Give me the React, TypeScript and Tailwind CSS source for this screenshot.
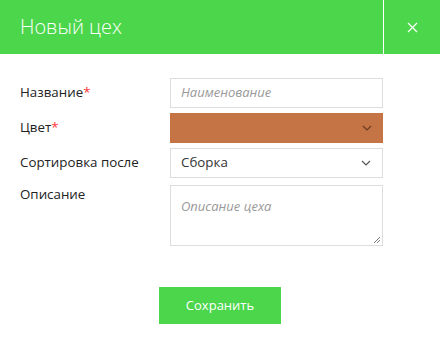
import React from "react";

const Chevron = ({ color = "#555" }: { color?: string }) => (
  <svg width="10" height="6" viewBox="0 0 10 6" fill="none">
    <path d="M1 1l4 4 4-4" stroke={color} strokeWidth="1.2" />
  </svg>
);

export default function App() {
  return (
    <div className="w-[440px] h-[340px] bg-white" style={{ fontFamily: '"Open Sans", sans-serif' }}>
      <div className="flex h-[54px] bg-[#4bd64b]">
        <div className="flex-1 flex items-center pl-[20px] text-white text-[20px] font-light">Новый цех</div>
        <div className="w-px bg-white" />
        <div className="w-[56px] flex items-center justify-center">
          <svg width="11" height="11" viewBox="0 0 11 11">
            <path d="M1 1l9 9M10 1l-9 9" stroke="white" strokeWidth="1.2" />
          </svg>
        </div>
      </div>
      <div className="pt-[24px] pl-[20px] flex flex-col">
        <div className="flex items-center h-[30px]">
          <div className="w-[150px] text-[13.33px] text-[#222]">
            Название<span className="text-[#f33]">*</span>
          </div>
          <div className="w-[213px] h-[30px] border border-[#ddd] flex items-center px-[10px] text-[13px] italic text-[#999]">
            Наименование
          </div>
        </div>
        <div className="flex items-center h-[30px] mt-[5px]">
          <div className="w-[150px] text-[13.33px] text-[#222]">
            Цвет<span className="text-[#f33]">*</span>
          </div>
          <div className="w-[213px] h-[30px] bg-[#c47445] flex items-center justify-end pr-[11px]">
            <Chevron color="#6b3a20" />
          </div>
        </div>
        <div className="flex items-center h-[30px] mt-[5px]">
          <div className="w-[150px] text-[13.33px] text-[#222]">Сортировка после</div>
          <div className="w-[213px] h-[30px] border border-[#ddd] flex items-center justify-between pl-[10px] pr-[11px] text-[13.33px] text-[#333]">
            <span>Сборка</span>
            <Chevron />
          </div>
        </div>
        <div className="flex items-start mt-[7px]">
          <div className="w-[150px] text-[13.33px] text-[#222]">Описание</div>
          <div className="relative w-[213px] h-[61px] border border-[#ddd] px-[10px] pt-[11px] text-[13px] italic text-[#999]">
            Описание цеха
            <svg className="absolute right-[1px] bottom-[1px]" width="8" height="8" viewBox="0 0 8 8">
              <path d="M7 1L1 7M7 4L4 7" stroke="#777" strokeWidth="1" />
            </svg>
          </div>
        </div>
      </div>
      <div className="flex justify-center mt-[41px]">
        <div className="w-[122px] h-[37px] bg-[#4bd64b] text-white text-[13px] flex items-center justify-center">
          Сохранить
        </div>
      </div>
    </div>
  );
}
